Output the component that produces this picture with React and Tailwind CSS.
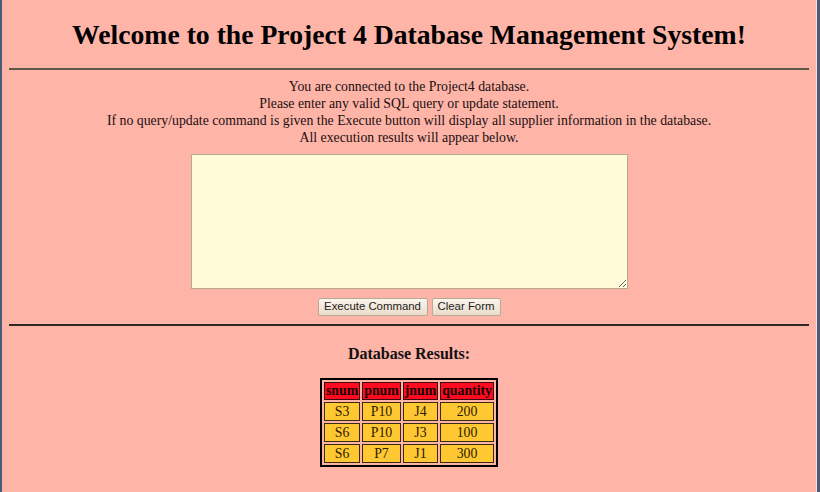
export default function App() {
  const rows = [
    ["S3", "P10", "J4", "200"],
    ["S6", "P10", "J3", "100"],
    ["S6", "P7", "J1", "300"],
  ];
  const serif = { fontFamily: '"Liberation Serif", "Times New Roman", serif' };
  return (
    <div className="w-[820px] h-[492px] flex bg-[#ffb4a8] overflow-hidden" style={serif}>
      <div className="w-[2px] bg-[#4c5a78]" />
      <div className="flex-1 flex flex-col items-center text-[#1a1010]">
        <h1 className="text-[27.7px] font-bold leading-none pt-[21px] h-[58px] text-black">
          Welcome to the Project 4 Database Management System!
        </h1>
        <div className="w-[800px] h-[2px] bg-[#5e5848] mt-[10px]" />
        <div className="text-[13.8px] leading-[17px] text-center mt-[8px]">
          <div>You are connected to the Project4 database.</div>
          <div>Please enter any valid SQL query or update statement.</div>
          <div>If no query/update command is given the Execute button will display all supplier information in the database.</div>
          <div>All execution results will appear below.</div>
        </div>
        <textarea className="mt-[8px] w-[437px] h-[135px] bg-[#fffad8] border border-[#b4aa90] resize-y outline-none" />
        <div className="flex gap-[4px] mt-[9px]" style={{ fontFamily: '"Liberation Sans", Arial, sans-serif' }}>
          <button className="h-[18px] w-[110px] text-[11.4px] leading-none text-[#222] border border-[#b8a898] rounded-[2px] bg-gradient-to-b from-[#fbf5ec] to-[#eadccb]">
            Execute Command
          </button>
          <button className="h-[18px] w-[69px] text-[11.4px] leading-none text-[#222] border border-[#b8a898] rounded-[2px] bg-gradient-to-b from-[#fbf5ec] to-[#eadccb]">
            Clear Form
          </button>
        </div>
        <div className="w-[800px] h-[2px] bg-[#2e2a22] mt-[8px]" />
        <div className="text-[16px] font-bold mt-[20px] leading-none text-[#111]">Database Results:</div>
        <table className="mt-[16px] border-2 border-black border-separate border-spacing-[2px] text-[13.8px] leading-[16px]">
          <thead>
            <tr>
              {["snum", "pnum", "jnum", "quantity"].map((h) => (
                <th key={h} className="bg-[#ff0a20] border border-[#3a0a0a] px-[1px] py-0 h-[18px] font-bold text-[#1a0000]">
                  {h}
                </th>
              ))}
            </tr>
          </thead>
          <tbody>
            {rows.map((r, i) => (
              <tr key={i}>
                {r.map((c, j) => (
                  <td key={j} className="bg-[#ffc832] border border-[#3a2a10] text-center py-0 h-[19px] text-[#2a1a00]">
                    {c}
                  </td>
                ))}
              </tr>
            ))}
          </tbody>
        </table>
      </div>
      <div className="w-[1px] bg-[#f2e0d8]" />
      <div className="w-[3px] bg-[#4c5a78]" />
    </div>
  );
}
